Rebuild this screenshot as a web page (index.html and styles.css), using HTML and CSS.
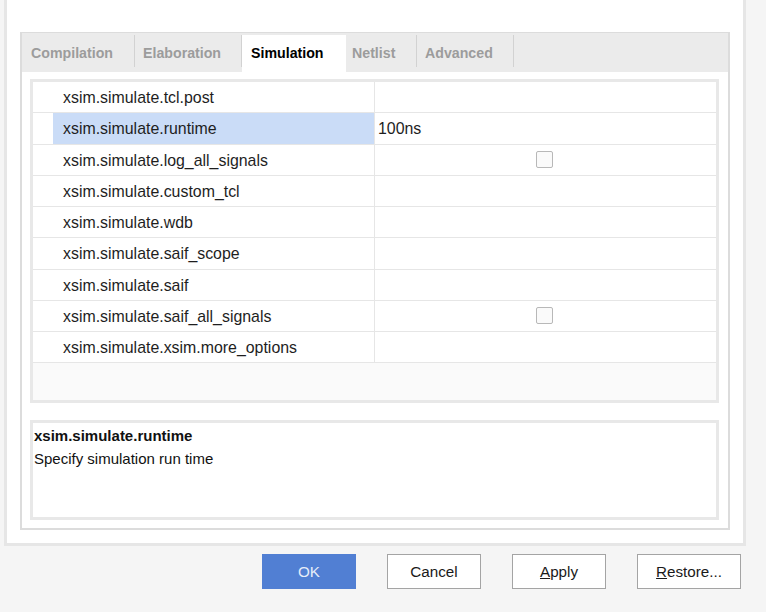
FILE: index.html
```html
<!DOCTYPE html>
<html>
<head>
<meta charset="utf-8">
<link rel="stylesheet" href="styles.css">
</head>
<body>
<div class="dialog">
  <div class="tabpanel">
    <div class="tabs">
      <div class="tab t1">Compilation</div>
      <div class="tab t2">Elaboration</div>
      <div class="tab t3 active">Simulation</div>
      <div class="tab t4">Netlist</div>
      <div class="tab t5">Advanced</div>
    </div>
    <div class="content">
      <div class="table">
        <div class="row"><div class="gut"></div><div class="name">xsim.simulate.tcl.post</div><div class="val"></div></div>
        <div class="row sel"><div class="gut"></div><div class="name">xsim.simulate.runtime</div><div class="val">100ns</div></div>
        <div class="row"><div class="gut"></div><div class="name">xsim.simulate.log_all_signals</div><div class="val center"><span class="cb"></span></div></div>
        <div class="row"><div class="gut"></div><div class="name">xsim.simulate.custom_tcl</div><div class="val"></div></div>
        <div class="row"><div class="gut"></div><div class="name">xsim.simulate.wdb</div><div class="val"></div></div>
        <div class="row"><div class="gut"></div><div class="name">xsim.simulate.saif_scope</div><div class="val"></div></div>
        <div class="row"><div class="gut"></div><div class="name">xsim.simulate.saif</div><div class="val"></div></div>
        <div class="row"><div class="gut"></div><div class="name">xsim.simulate.saif_all_signals</div><div class="val center"><span class="cb"></span></div></div>
        <div class="row"><div class="gut"></div><div class="name">xsim.simulate.xsim.more_options</div><div class="val"></div></div>
        <div class="empty"></div>
      </div>
      <div class="desc">
        <div class="desc-title">xsim.simulate.runtime</div>
        <div class="desc-text">Specify simulation run time</div>
      </div>
    </div>
  </div>
</div>
<div class="buttons">
  <button class="btn primary">OK</button>
  <button class="btn">Cancel</button>
  <button class="btn"><u>A</u>pply</button>
  <button class="btn wide"><u>R</u>estore...</button>
</div>
</body>
</html>
```
FILE: styles.css
```css
* { box-sizing: border-box; }
html, body { margin: 0; padding: 0; }
body {
  background: #f5f5f5;
  font-family: "Liberation Sans", Arial, sans-serif;
  color: #1e1e1e;
  width: 766px;
  height: 612px;
  overflow: hidden;
}
.dialog {
  margin-left: 4px;
  width: 742px;
  height: 546px;
  background: #fff;
  border: 3px solid #e6e6e6;
  border-top: none;
  padding: 32px 13px 0 13px;
}
.tabpanel {
  width: 710px;
  height: 498px;
  border: 2px solid #dcdcdc;
  border-top-width: 1px;
  display: flex;
  flex-direction: column;
}
.tabs {
  height: 39px;
  background: #ebebeb;
  display: flex;
  align-items: flex-start;
  padding-top: 2px;
  flex: none;
}
.tab {
  height: 32px;
  line-height: 36px;
  font-size: 14.2px;
  font-weight: bold;
  color: #9c9c9c;
  border-right: 1px solid #d2d2d2;
  white-space: nowrap;
}
.tab.active {
  height: 37px;
  line-height: 36px;
  background: #fff;
  color: #000;
  border-right: none;
}
.t1 { width: 113px; padding-left: 9px; }
.t2 { width: 107px; padding-left: 8px; }
.t3 { width: 104px; padding-left: 9px; }
.t4 { width: 71px; padding-left: 6px; }
.t5 { width: 97px; padding-left: 8px; }
.content {
  flex: 1;
  background: #fff;
  padding: 7px 9px 0 8px;
  display: flex;
  flex-direction: column;
}
.table {
  height: 324px;
  border: 3px solid #e8e8e8;
  display: flex;
  flex-direction: column;
  background: #fafafa;
}
.row {
  height: 31.25px;
  display: flex;
  border-bottom: 1px solid #e6e6e6;
  background: #fff;
  font-size: 15.9px;
  flex: none;
}
.gut { width: 20px; flex: none; }
.name {
  width: 322px;
  flex: none;
  padding-left: 10px;
  padding-top: 1px;
  line-height: 30px;
  border-right: 1px solid #e6e6e6;
  white-space: nowrap;
}
.row.sel .name { background: #cadcf7; }
.val {
  flex: 1;
  padding-left: 3px;
  padding-top: 1px;
  line-height: 30px;
}
.val.center {
  display: flex;
  align-items: center;
  justify-content: center;
  padding: 0 2px 0 0;
}
.cb {
  width: 17px;
  height: 17px;
  border: 1px solid #b8b8b8;
  border-radius: 2px;
  background: #fafafa;
}
.empty { flex: 1; background: #fafafa; }
.desc {
  margin-top: 17px;
  height: 100px;
  border: 3px solid #e8e8e8;
  padding: 4px 1px 0 1px;
  font-size: 15px;
  color: #111;
}
.desc-title { font-weight: bold; line-height: 18px; }
.desc-text { line-height: 18px; margin-top: 5px; }
.buttons {
  display: flex;
  justify-content: flex-end;
  gap: 31px;
  padding-right: 25px;
  margin-top: 8px;
}
.btn {
  width: 94px;
  height: 35px;
  border: 1px solid #a4a4a4;
  background: #fff;
  font-family: "Liberation Sans", Arial, sans-serif;
  font-size: 15.2px;
  color: #1a1a1a;
  padding: 0;
}
.btn.wide { width: 104px; }
.btn.primary {
  background: #517fd3;
  border-color: #517fd3;
  color: #e6edf9;
}
```
